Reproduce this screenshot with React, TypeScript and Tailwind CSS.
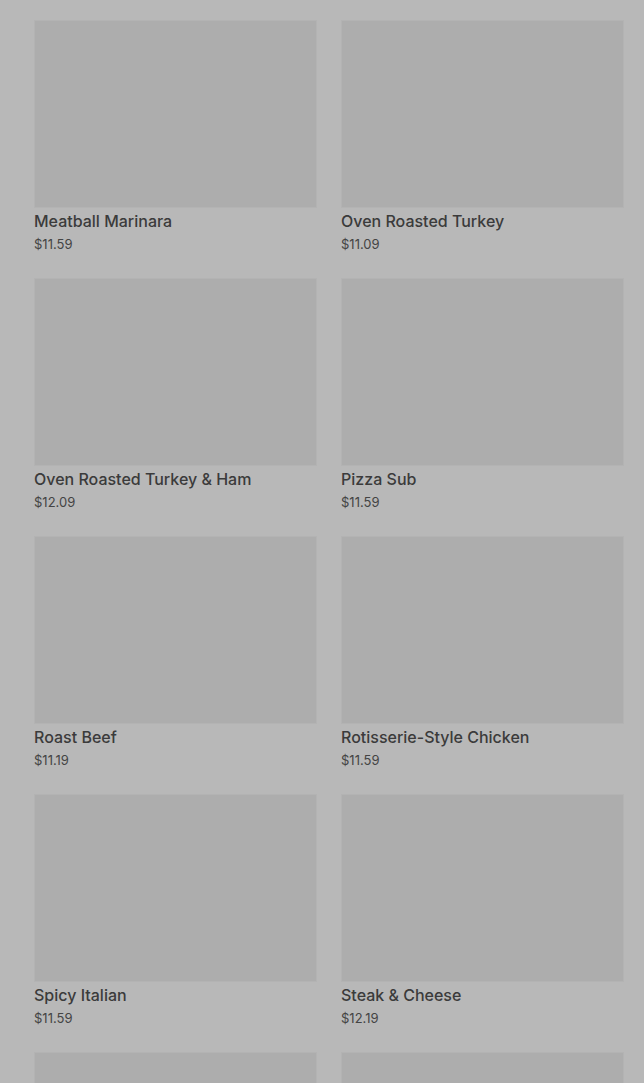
import React from 'react';

const items = [
  { name: 'Meatball Marinara', price: '$11.59' },
  { name: 'Oven Roasted Turkey', price: '$11.09' },
  { name: 'Oven Roasted Turkey & Ham', price: '$12.09' },
  { name: 'Pizza Sub', price: '$11.59' },
  { name: 'Roast Beef', price: '$11.19' },
  { name: 'Rotisserie-Style Chicken', price: '$11.59' },
  { name: 'Spicy Italian', price: '$11.59' },
  { name: 'Steak & Cheese', price: '$12.19' },
  { name: '', price: '' },
  { name: '', price: '' },
];

export default function App() {
  return (
    <div className="min-h-[1083px] h-[1083px] overflow-hidden bg-[#b8b8b8] pl-[34px] pr-[20px] pt-[20px]" style={{ fontFamily: 'Inter, "Noto Sans", sans-serif' }}>
      <div className="grid grid-cols-2 gap-x-[24px] gap-y-[24px]">
        {items.map((item, i) => (
          <div key={i} className="flex flex-col h-[234px]">
            <div className="h-[188px] bg-[#adadad] border border-[#b3b3b3]" />
            {item.name && (
              <>
                <h3 className="mt-[3px] text-[16px] leading-[20px] font-medium text-[#3b3b3b]">{item.name}</h3>
                <p className="mt-[4px] text-[13px] leading-[18px] text-[#444]">{item.price}</p>
              </>
            )}
          </div>
        ))}
      </div>
    </div>
  );
}
